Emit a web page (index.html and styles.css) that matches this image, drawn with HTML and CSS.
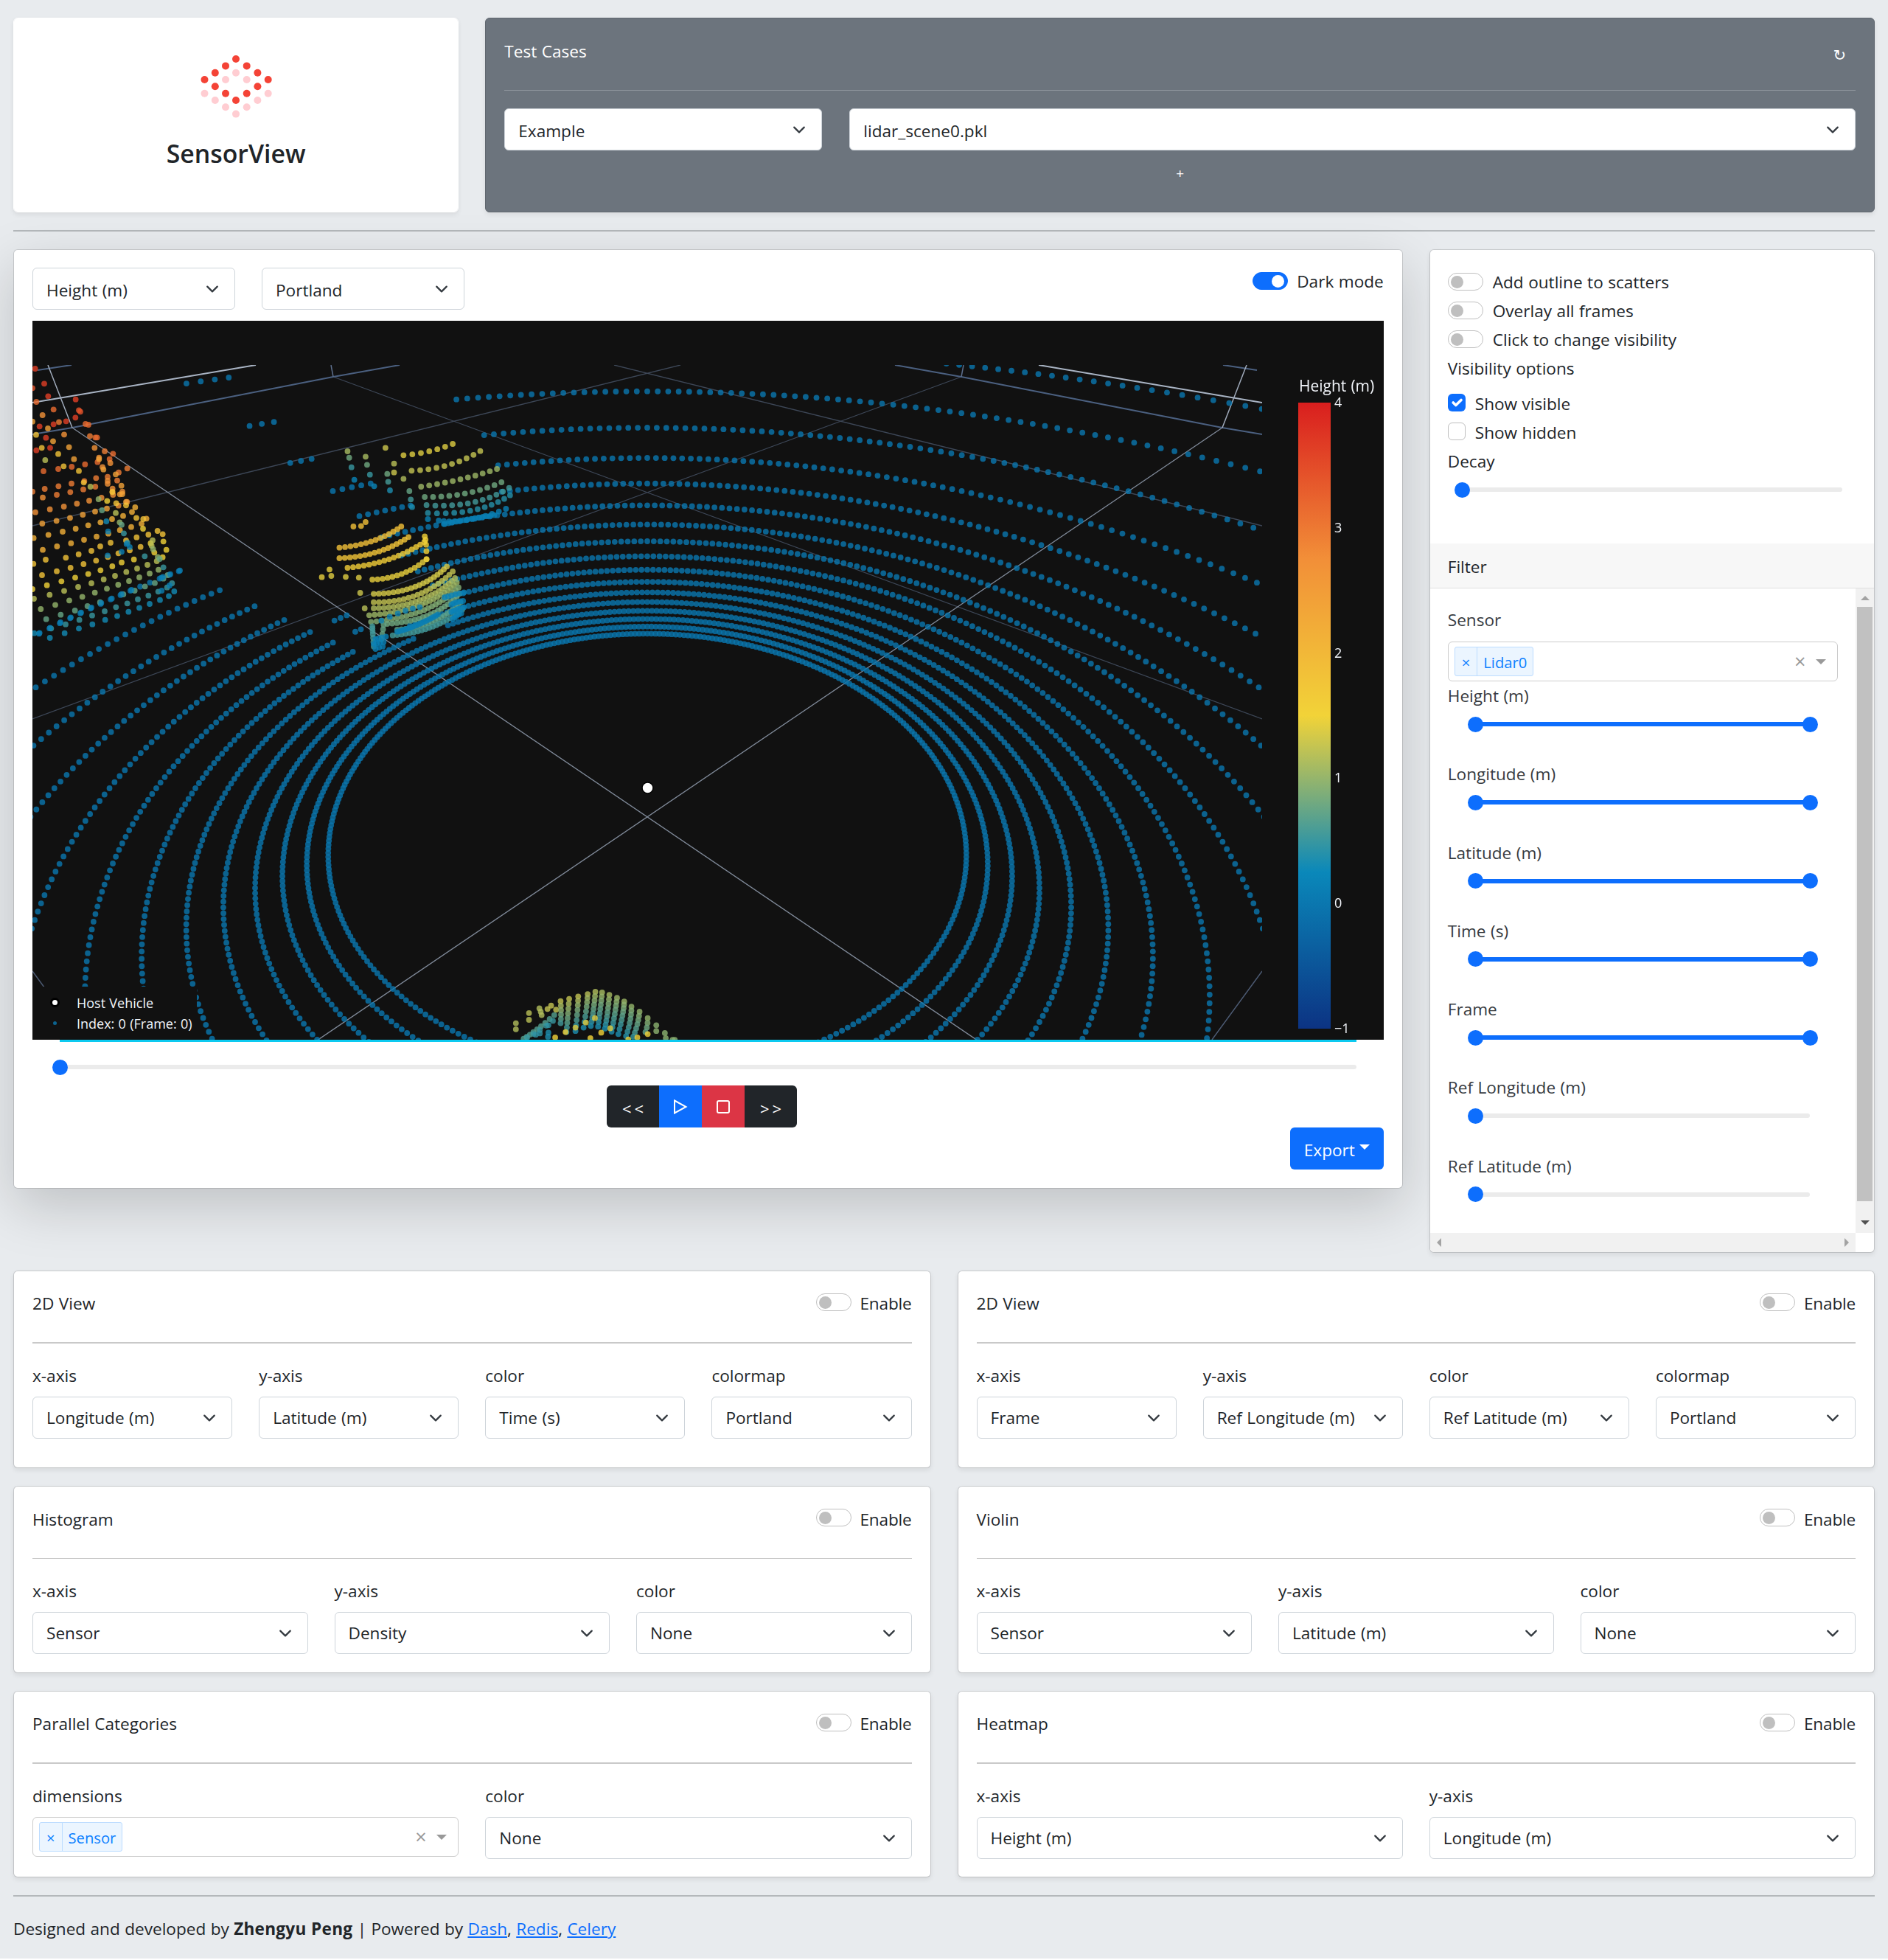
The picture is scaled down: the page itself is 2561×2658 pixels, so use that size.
FILE: index.html
```html
<!DOCTYPE html>
<html lang="en">
<head>
<meta charset="utf-8">
<title>SensorView</title>
<link rel="stylesheet" href="styles.css">
</head>
<body>
<svg class="defs" width="0" height="0">
  <symbol id="chev" viewBox="0 0 16 16"><path d="M2 5l6 6 6-6" fill="none" stroke="#343a40" stroke-width="2" stroke-linecap="round" stroke-linejoin="round"/></symbol>
</svg>
<div class="page">
  <div class="row top">
    <div class="card logo">
      <svg width="100" height="90" viewBox="270 72 100 90">
        <g fill="#ffcdd2"><circle cx="320" cy="98.7" r="5"/><circle cx="306" cy="108" r="5"/><circle cx="334.7" cy="108" r="5"/><circle cx="277.5" cy="126.7" r="5"/><circle cx="363.7" cy="126.7" r="5"/><circle cx="291.8" cy="136" r="5"/><circle cx="349.4" cy="136" r="5"/><circle cx="306" cy="145.3" r="5"/><circle cx="334.7" cy="145.3" r="5"/><circle cx="320" cy="154.6" r="5"/></g>
        <g fill="#f44336"><circle cx="320" cy="80" r="5"/><circle cx="306" cy="89.4" r="5"/><circle cx="334.7" cy="89.4" r="5"/><circle cx="291.8" cy="98.7" r="5"/><circle cx="349.4" cy="98.7" r="5"/><circle cx="277.5" cy="108" r="5"/><circle cx="363.7" cy="108" r="5"/><circle cx="291.8" cy="117.3" r="5"/><circle cx="349.4" cy="117.3" r="5"/><circle cx="306" cy="126.7" r="5"/><circle cx="334.7" cy="126.7" r="5"/><circle cx="320" cy="136" r="5"/></g>
      </svg>
      <h1>SensorView</h1>
    </div>
    <div class="card cases">
      <div class="cases-head"><span>Test Cases</span><span class="refresh">↻</span></div>
      <div class="cases-row">
        <div class="select">Example<svg><use href="#chev"/></svg></div>
        <div class="select">lidar_scene0.pkl<svg><use href="#chev"/></svg></div>
      </div>
      <div class="plus">+</div>
    </div>
  </div>
  <div class="rule"></div>
  <div class="row main">
    <div class="card view">
      <div class="view-head">
        <div class="select">Height (m)<svg><use href="#chev"/></svg></div>
        <div class="select">Portland<svg><use href="#chev"/></svg></div>
        <label class="check dark"><i class="switch on"></i>Dark mode</label>
      </div>
      <div class="plot">
        <canvas id="scene" width="1833" height="975"></canvas>
        <div class="bar-title">Height (m)</div>
        <div class="bar"></div>
        <div class="ticks"><span>4</span><span>3</span><span>2</span><span>1</span><span>0</span><span>−1</span></div>
        <div class="legend">
          <div><i class="host"></i>Host Vehicle</div>
          <div><i class="idx"></i>Index: 0 (Frame: 0)</div>
        </div>
      </div>
      <div class="progress"></div>
      <div class="slider frame"><i class="knob"></i></div>
      <div class="buttons">
        <span class="b1">&lt;&lt;</span>
        <span class="b2"><svg width="20" height="20" viewBox="0 0 20 20"><path d="M2 1.5L17.5 10L2 18.5Z" fill="none" stroke="#fff" stroke-width="2"/></svg></span>
        <span class="b3"><svg width="20" height="20" viewBox="0 0 20 20"><rect x="2" y="2" width="16" height="16" rx="2" fill="none" stroke="#fff" stroke-width="2"/></svg></span>
        <span class="b4">&gt;&gt;</span>
      </div>
      <div class="export">Export<i></i></div>
    </div>
    <div class="card side">
      <div class="opts">
        <label class="check"><i class="switch"></i>Add outline to scatters</label>
        <label class="check"><i class="switch"></i>Overlay all frames</label>
        <label class="check"><i class="switch"></i>Click to change visibility</label>
        <div class="opt-title">Visibility options</div>
        <label class="check"><i class="box on"><svg width="24" height="24" viewBox="0 0 20 20"><path d="M6 10l3 3 6-6" fill="none" stroke="#fff" stroke-width="3" stroke-linecap="round" stroke-linejoin="round"/></svg></i>Show visible</label>
        <label class="check"><i class="box"></i>Show hidden</label>
        <div class="decay-title">Decay</div>
        <div class="slider decay"><i class="knob"></i></div>
      </div>
      <div class="filter-head">Filter</div>
      <div class="filter">
        <div class="filter-body">
          <div class="flabel">Sensor</div>
          <div class="multi"><span class="tag"><b>×</b><em>Lidar0</em></span><span class="clear">×</span><i class="caret"></i></div>
          <div class="fitem"><span>Height (m)</span><div class="slider full"><i class="knob"></i><i class="knob"></i></div></div>
          <div class="fitem"><span>Longitude (m)</span><div class="slider full"><i class="knob"></i><i class="knob"></i></div></div>
          <div class="fitem"><span>Latitude (m)</span><div class="slider full"><i class="knob"></i><i class="knob"></i></div></div>
          <div class="fitem"><span>Time (s)</span><div class="slider full"><i class="knob"></i><i class="knob"></i></div></div>
          <div class="fitem"><span>Frame</span><div class="slider full"><i class="knob"></i><i class="knob"></i></div></div>
          <div class="fitem"><span>Ref Longitude (m)</span><div class="slider"><i class="knob"></i></div></div>
          <div class="fitem"><span>Ref Latitude (m)</span><div class="slider"><i class="knob"></i></div></div>
        </div>
        <div class="vbar"><i class="up"></i><i class="thumb"></i><i class="down"></i></div>
        <div class="hbar"><i class="left"></i><i class="right"></i></div>
      </div>
    </div>
  </div>
  <div class="panels">
    <div class="card panel p1">
      <div class="phead"><span>2D View</span><label class="check"><i class="switch"></i>Enable</label></div>
      <div class="fields">
        <div><span>x-axis</span><div class="select">Longitude (m)<svg><use href="#chev"/></svg></div></div>
        <div><span>y-axis</span><div class="select">Latitude (m)<svg><use href="#chev"/></svg></div></div>
        <div><span>color</span><div class="select">Time (s)<svg><use href="#chev"/></svg></div></div>
        <div><span>colormap</span><div class="select">Portland<svg><use href="#chev"/></svg></div></div>
      </div>
    </div>
    <div class="card panel p1">
      <div class="phead"><span>2D View</span><label class="check"><i class="switch"></i>Enable</label></div>
      <div class="fields">
        <div><span>x-axis</span><div class="select">Frame<svg><use href="#chev"/></svg></div></div>
        <div><span>y-axis</span><div class="select">Ref Longitude (m)<svg><use href="#chev"/></svg></div></div>
        <div><span>color</span><div class="select">Ref Latitude (m)<svg><use href="#chev"/></svg></div></div>
        <div><span>colormap</span><div class="select">Portland<svg><use href="#chev"/></svg></div></div>
      </div>
    </div>
    <div class="card panel p2">
      <div class="phead"><span>Histogram</span><label class="check"><i class="switch"></i>Enable</label></div>
      <div class="fields">
        <div><span>x-axis</span><div class="select">Sensor<svg><use href="#chev"/></svg></div></div>
        <div><span>y-axis</span><div class="select">Density<svg><use href="#chev"/></svg></div></div>
        <div><span>color</span><div class="select">None<svg><use href="#chev"/></svg></div></div>
      </div>
    </div>
    <div class="card panel p2">
      <div class="phead"><span>Violin</span><label class="check"><i class="switch"></i>Enable</label></div>
      <div class="fields">
        <div><span>x-axis</span><div class="select">Sensor<svg><use href="#chev"/></svg></div></div>
        <div><span>y-axis</span><div class="select">Latitude (m)<svg><use href="#chev"/></svg></div></div>
        <div><span>color</span><div class="select">None<svg><use href="#chev"/></svg></div></div>
      </div>
    </div>
    <div class="card panel p3">
      <div class="phead"><span>Parallel Categories</span><label class="check"><i class="switch"></i>Enable</label></div>
      <div class="fields">
        <div><span>dimensions</span><div class="multi"><span class="tag"><b>×</b><em>Sensor</em></span><span class="clear">×</span><i class="caret"></i></div></div>
        <div><span>color</span><div class="select">None<svg><use href="#chev"/></svg></div></div>
      </div>
    </div>
    <div class="card panel p3">
      <div class="phead"><span>Heatmap</span><label class="check"><i class="switch"></i>Enable</label></div>
      <div class="fields">
        <div><span>x-axis</span><div class="select">Height (m)<svg><use href="#chev"/></svg></div></div>
        <div><span>y-axis</span><div class="select">Longitude (m)<svg><use href="#chev"/></svg></div></div>
      </div>
    </div>
  </div>
  <div class="rule last"></div>
  <footer>Designed and developed by <strong>Zhengyu Peng</strong> | Powered by <a>Dash</a>, <a>Redis</a>, <a>Celery</a></footer>
</div>
<script src="scene.js"></script>
</body>
</html>
```
FILE: styles.css
```css
* { box-sizing: border-box; }
body { margin: 0; background: #fff; color: #212529; font: 22.6px/36px "Open Sans", "Noto Sans", sans-serif; word-spacing: .6px; }
i, em { font-style: normal; }
.defs { position: absolute; }
.page { height: 2656px; background: #e8ebee; padding: 24px 18px 0; overflow: hidden; }
.row { display: grid; grid-template-columns: 604.25px 1884.75px; gap: 36px; }
.card { background: #fff; border: 1px solid rgba(0,0,0,.125); background-clip: padding-box; border-radius: 6px; box-shadow: 0 3px 6px rgba(0,0,0,.075); }
.top { height: 264px; }
.logo { display: flex; flex-direction: column; align-items: center; padding-top: 47px; border-color: #fff; }
.logo h1 { margin: 21px 0 0; font-size: 33.8px; line-height: 50px; font-weight: 600; }
.cases { background: #6c747d; border-color: #5f666e; padding: 0 25px; color: #fff; }
.cases-head { height: 98px; padding: 27px 0 0; display: flex; justify-content: space-between; border-bottom: 1px solid #8e959c; }
.refresh { margin: 5px 13px 0 0; font: 21px/36px "DejaVu Sans", sans-serif; }
.cases-row { display: grid; grid-template-columns: 431px 1fr; gap: 37px; margin-top: 24px; }
.plus { text-align: center; font-size: 19px; line-height: 24px; margin-top: 19px; }
.select { position: relative; height: 57px; border: 1px solid #ced4da; border-radius: 6px; background: #fff; color: #212529; padding: 10px 50px 0 18px; white-space: nowrap; }
.cases .select, .view .select { padding-top: 11.5px; }
.select svg { position: absolute; right: 21px; top: 19px; width: 18px; height: 18px; }
.rule { height: 2px; background: #b4b8bb; margin: 24px 0; }
.main { grid-template-columns: 1884.75px 604.25px; height: 1360px; align-items: start; }
.view { height: 1274px; padding: 24px 25px 0; box-shadow: 0 24px 72px rgba(0,0,0,.175); }
.view-head { display: flex; gap: 36px; height: 72px; }
.view-head .select { width: 275px; }
.check { display: flex; height: 36px; line-height: 38px; margin-bottom: 3px; white-space: nowrap; }
.dark { margin-left: auto; }
.switch { width: 48px; height: 24px; border: 1.5px solid #bfbfbf; border-radius: 12px; margin: 6px 13px 0 0; padding: 3px; background: #fff; }
.dark .switch { margin-right: 12px; }
.switch::after { content: ""; display: block; width: 17px; height: 17px; border-radius: 50%; background: #bfbfbf; }
.switch.on { background: #0d6efd; border-color: #0d6efd; padding-left: 25px; }
.switch.on::after { background: #fff; }
.plot { position: relative; width: 1833px; height: 975px; background: #111; color: #f2f5fa; font-size: 18px; }
.plot canvas { display: block; }
.bar-title { position: absolute; left: 1718px; top: 70px; font-size: 21px; }
.bar { position: absolute; left: 1717px; top: 111px; width: 44px; height: 849px; background: linear-gradient(#d91e1e, #f28f38 25%, #f2d338 50%, #0a88ba 75%, #0c3383); }
.ticks { position: absolute; left: 1766px; top: 92px; display: flex; flex-direction: column; justify-content: space-between; height: 885px; }
.ticks span { height: 36px; }
.legend { position: absolute; left: 0; top: 903px; width: 223px; height: 72px; background: #111; padding-top: 8px; }
.legend div { display: flex; align-items: center; height: 28px; padding-left: 60px; position: relative; }
.legend i { position: absolute; border-radius: 50%; background: #fff; left: 26.5px; top: 10px; width: 7px; height: 7px; box-shadow: 0 0 0 3px #000; }
.legend .idx { background: #0c638f; width: 5px; height: 5px; left: 28px; top: 11px; box-shadow: none; }
.progress { height: 3px; margin: 0 37px; background: #0dcaf0; }
.slider { display: flex; align-items: center; justify-content: space-between; height: 6px; border-radius: 3px; background: #ebebeb; }
.slider .knob { width: 21px; height: 21px; border-radius: 50%; background: #0d6efd; margin: 0 -10.5px; }
.slider.full { background: #0d6efd; }
.frame { margin: 31px 37px 0; }
.buttons { display: flex; margin: 22px auto 0 779px; width: 258px; height: 57px; border-radius: 6px; overflow: hidden; color: #fff; text-align: center; }
.buttons span { display: flex; align-items: center; justify-content: center; }
.b1, .b4 { width: 71px; background: #212529; letter-spacing: 4px; padding: 5px 0 0 4px; font-size: 22px; }
.b2 { width: 58px; background: #0d6efd; }
.b3 { width: 58px; background: #dc3545; }
.export { margin-left: auto; width: 127px; height: 57px; border-radius: 6px; background: #0d6efd; color: #fff; display: flex; align-items: center; padding: 4px 0 0 19px; }
.export i { border: 7px solid transparent; border-top-color: #fff; border-bottom: 0; margin: -8px 0 0 6px; }
.side { height: 1361px; display: flex; flex-direction: column; overflow: hidden; }
.opts { height: 398px; padding: 25px 43px 0 24px; }
.opts .check .box { margin-right: 13px; }
.opt-title { height: 36px; line-height: 38px; margin-bottom: 12px; }
.decay-title { height: 36px; line-height: 38px; }
.box { width: 24px; height: 24px; border: 1.5px solid #bfbfbf; border-radius: 6px; margin-top: 5px; }
.box.on { border: 0; background: #0d6efd; }
.box svg { display: block; }
.decay { margin: 18px 0 0 20px; }
.filter-head { height: 61px; padding: 14px 24px 0; background: #f7f7f7; border-bottom: 1.5px solid #dfdfdf; }
.filter { flex: 1; display: grid; grid-template: 1fr 26px / 1fr 25px; }
.filter-body { padding: 24px 24px 0; color: #373b3f; }
.flabel { height: 48px; padding-top: 1px; }
.multi { display: flex; align-items: center; height: 54px; border: 1.5px solid #ccc; border-radius: 6px; background: #fff; padding: 0 15.5px 0 8px; }
.tag { display: flex; height: 40px; border: 1.5px solid #bcdcff; border-radius: 3px; background: #ebf5ff; color: #0d80ff; font-size: 20.2px; line-height: 41px; }
.tag b { font-weight: 400; width: 30.5px; text-align: center; border-right: 1.5px solid #bcdcff; }
.tag em { padding: 0 8px; }
.clear { margin-left: auto; color: #999; font-size: 27px; line-height: 50px; padding-right: 13px; }
.caret { border: 7.5px solid transparent; border-top-color: #999; border-bottom: 0; }
.fitem { height: 106.3px; padding-top: 2px; }
.fitem span { display: block; height: 53px; }
.fitem .slider { margin: 0 38px; }
.vbar { background: #f1f1f1; display: flex; flex-direction: column; align-items: center; }
.vbar .up { border: 6px solid transparent; border-top: 0; border-bottom-color: #a3a3a3; margin-top: 10px; }
.vbar .thumb { width: 21px; height: 806px; background: #c1c1c1; margin-top: 9px; }
.vbar .down { border: 6px solid transparent; border-bottom: 0; border-top-color: #505050; margin-top: 26px; }
.hbar { background: #f1f1f1; display: flex; align-items: center; justify-content: space-between; padding: 0 9px; }
.hbar i { border: 6px solid transparent; }
.hbar .left { border-left: 0; border-right-color: #a3a3a3; }
.hbar .right { border-right: 0; border-left-color: #a3a3a3; }
.panels { display: grid; grid-template-columns: 1fr 1fr; grid-template-rows: 268px 254px 253px; gap: 24px 36px; margin-top: 25px; }
.panel { padding: 25px 25px 0; }
.phead { display: flex; justify-content: space-between; height: 73px; line-height: 38px; border-bottom: 2px solid #c9c9c9; }
.phead .check { letter-spacing: -.2px; }
.phead .switch { margin-right: 12px; margin-top: 5px; }
.p2 .phead { border-bottom-width: 1px; }
.p2 .phead, .p2 .phead .check { line-height: 39px; }
.fields { display: grid; grid-auto-flow: column; grid-auto-columns: 1fr; gap: 36px; margin-top: 24px; }
.fields span { display: block; }
.fields > div > span { height: 48px; padding-top: 2px; }
.fields .multi span { height: auto; }
.fields .multi .tag { display: flex; height: 40px; }
.rule.last { margin: 24px 0 0; }
footer { margin-top: 26px; word-spacing: .5px; }
footer strong { letter-spacing: .25px; }
footer a { color: #0d6efd; text-decoration: underline; }
```
FILE: scene.js
```javascript
// Draws the lidar point cloud and the 3D axes on the dark scene canvas.
const ctx = document.getElementById('scene').getContext('2d');
ctx.translate(-44, -435);
ctx.beginPath();
ctx.rect(44, 495, 1668, 915);
ctx.clip();

const CX = 878;
function line(x1, y1, x2, y2, color, w, mirror = true) {
  ctx.strokeStyle = color;
  ctx.lineWidth = w;
  ctx.beginPath();
  ctx.moveTo(x1, y1); ctx.lineTo(x2, y2);
  if (mirror) { ctx.moveTo(2 * CX - x1, y1); ctx.lineTo(2 * CX - x2, y2); }
  ctx.stroke();
}
line(452, 511, 1712, 975, '#3d4757', 1.3);
line(44, 713, 923, 495, '#3d4757', 1.3);
line(44, 1317, 112, 1410, '#4c5a72', 1.5);
line(44, 589, 98, 580, '#4b6080', 2);
line(98, 580, 452, 511, '#4b6080', 2);
line(452, 511, 542, 495, '#4b6080', 2);
line(51, 502, 97, 495, '#4b6080', 2);
line(449, 495, 452, 511, '#5c6e8c', 1.5);
line(44, 546, 347, 495, '#a9b4c4', 2);
line(65, 495, 98, 580, '#a0abbb', 1.5);
line(98, 580, 1326, 1411, '#7f8998', 1.4);

const STOPS = [[12, 51, 131], [10, 136, 186], [242, 211, 56], [242, 143, 56], [217, 30, 30]];
function portland(p) {
  const k = Math.min(3, Math.floor(p * 4)), t = p * 4 - k;
  return STOPS[k].map((c, i) => Math.round(c + (STOPS[k + 1][i] - c) * t));
}
function dot(x, y, p, r = 3.9) {
  ctx.fillStyle = `rgba(${portland(p)},0.8)`;
  ctx.beginPath();
  ctx.arc(x, y, r, 0, Math.PI * 2);
  ctx.fill();
}

// Ground rings: [y of the far end, blocked angle ranges], angles measured from the left axis.
const C = 904, F = 1366, HORIZON = 165;
const rings = [
  [859.3, []], [849.7, []], [839.3, []], [828.3, []], [816.3, []],
  [803.3, [[45, 50]]], [789, [[36, 45]]], [772.7, [[36, 38], [41, 54]]], [754.3, [[36, 38], [42, 54]]],
  [734, [[36, 54]]], [711.3, [[36, 54]]], [685.3, [[36, 54]]], [655.7, [[36, 54], [62, 71]]],
  [621, [[-90, 54], [60, 72]]], [580, [[-90, 53], [57, 72]]], [530.7, [[-90, 53], [57, 71]]],
  [472.9, [[-90, 52], [57, 114]]]
];
for (const [far, gaps] of rings) {
  const s = C / (far - HORIZON) - 1;
  for (let a = -180; a < 180; a++) {
    if (gaps.some(([b, e]) => a >= b && a <= e)) continue;
    const t = a * Math.PI / 180;
    const depth = 1 + s * Math.sin(t);
    if (depth < 0.3) continue;
    dot(CX - F * s * Math.cos(t) / depth, HORIZON + C / depth, 0.2);
  }
}

// Building facade on the left, in facade coordinates (three units per pixel).
const facade = {
  0.93: '23,30 60,91 76,142 188,155 41,265 98,256 149,244 187,229 67,311 84,352 28,362',
  0.88: '201,199 207,205 12,109',
  0.83: '98,196 28,165 228,255 240,258 57,447 117,438 172,429 226,419 277,410 340,376 326,398 268,310 275,310',
  0.79: '120,247 246,304 306,366 271,475 171,497 118,508 62,519 223,487 318,470 363,452 12,530 398,436 357,485 219,521 268,510 166,532 111,543',
  0.74: '53,219 141,298 265,352 283,392 297,430 318,486 54,554 24,614 83,602 140,591 193,579 243,567 293,555 329,414 340,543 378,530 397,572 362,587 338,518 318,498',
  0.68: '75,273 96,325 161,349 181,398 52,660 110,649 165,637 217,624 267,611 315,599 283,398 301,440 351,460 374,506 338,530 378,540 368,541 393,572 12,245',
  0.63: '17,719 77,706 135,693 188,681 239,667 289,655 336,642 381,629 417,613 430,594 476,640 368,687 414,674 321,701 54,767 112,753 169,740 222,726 273,713 456,661',
  0.56: '27,299 50,352 117,377 139,427 201,446 221,493 353,577 393,586 435,637 463,642 521,690 542,703 484,705 436,716 393,729 330,738 288,753 252,771 200,785 148,799 66,807 16,824 452,755 408,769 362,781 319,796 271,811 220,825 167,840 111,854 51,870 337,532',
  0.5: '545,733 493,740 557,767 508,778 12,927 71,911 130,895 186,880 239,865 289,850 337,834 375,818 425,806 462,681 316,568 542,797',
  0.44: '64,402 248,510 18,966 82,950 141,934 198,918 252,903 302,887 348,873 394,857 438,843 480,828 518,813 501,728 497,750 351,617',
  0.4: '281,561 46,1008 105,991 162,973 215,958 266,941 315,925 361,909 405,894 447,879 489,863 525,848 367,655 503,764 522,796',
  0.35: '295,606 68,1049 127,1031 185,1014 236,996 287,980 382,948 428,933 470,916 510,902 545,884 375,665 530,804 562,870',
  0.3: '88,1087 147,1070 203,1052 255,1034 306,1017 352,1000 398,985 441,968 484,953 524,937 560,920 384,700 399,738 545,838 469,793 580,903',
  0.26: '19,1106 83,1125 143,1106 201,1087 256,1070 308,1052 357,1036 403,1019 447,1003 489,987 531,971 567,955 589,936 313,651',
  0.22: '84,1084 126,1062 168,1042 210,1022 252,1002 292,983 335,965 375,947 415,930 41,1105 320,692 318,790 375,775 395,743 408,756 536,881 573,866 612,851 538,933 570,912 543,877'
};
for (const [p, list] of Object.entries(facade)) {
  for (const s of list.split(' ')) {
    const [x, y] = s.split(',').map(Number);
    dot(40 + x / 3, 490 + y / 3, +p);
  }
}

// Vehicles: each arc is [x1, y1, xMid, yMid, x2, y2, count, colour position, end colour position].
function arcs(list, sx, oy, sy) {
  for (const [x1, y1, xm, ym, x2, y2, n, p, q = p] of list) {
    for (let i = 0; i < n; i++) {
      const t = n > 1 ? i / (n - 1) : 0;
      const a = (1 - t) * (1 - 2 * t), b = 4 * t * (1 - t), c = t * (2 * t - 1);
      dot((a * x1 + b * xm + c * x2) / sx, oy + (a * y1 + b * ym + c * y2) / sy, p + (q - p) * t);
    }
  }
}
arcs([
  [894, 562, 951, 546, 1003, 516, 7, .48], [912, 625, 993, 602, 1064, 545, 10, .45],
  [933, 690, 1020, 660, 1101, 618, 11, .41], [941, 732, 1030, 718, 1111, 672, 11, .36],
  [945, 765, 1045, 755, 1128, 695, 12, .31], [948, 797, 1050, 785, 1130, 725, 12, .28],
  [948, 822, 948, 822, 948, 822, 1, .24], [972, 828, 1040, 824, 1121, 780, 12, .23],
  [985, 842, 1040, 822, 1095, 806, 14, .22],
  [770, 546, 776, 590, 785, 662, 4, .42, .24], [810, 568, 816, 620, 829, 688, 4, .42, .24],
  [854, 532, 865, 582, 873, 632, 2, .46], [894, 658, 894, 658, 894, 658, 1, .43], [873, 596, 873, 596, 873, 596, 1, .44],
  [858, 638, 860, 670, 864, 705, 3, .36, .27], [907, 708, 910, 742, 913, 773, 3, .35, .27],
  [783, 852, 800, 850, 810, 834, 3, .57], [752, 938, 827, 910, 889, 852, 14, .57],
  [752, 981, 835, 956, 905, 895, 16, .55], [770, 1020, 862, 985, 940, 915, 17, .52],
  [941, 892, 944, 926, 945, 985, 5, .5], [825, 1068, 890, 1045, 945, 985, 13, .49],
  [730, 1027, 730, 1027, 713, 1058, 2, .49], [734, 1053, 766, 1057, 795, 1060, 3, .48],
  [798, 1122, 798, 1122, 798, 1122, 1, .46], [828, 1126, 920, 1097, 990, 1015, 19, .47],
  [828, 1160, 925, 1130, 1003, 1035, 19, .45], [808, 1185, 808, 1185, 808, 1185, 1, .44],
  [828, 1185, 930, 1152, 1008, 1062, 21, .43], [818, 1213, 930, 1172, 1012, 1080, 22, .41],
  [822, 1240, 935, 1195, 1016, 1100, 22, .38], [858, 1248, 950, 1212, 1018, 1125, 20, .36],
  [880, 1272, 960, 1238, 1020, 1160, 20, .34], [870, 1295, 955, 1262, 1024, 1190, 20, .31],
  [825, 1258, 826, 1290, 828, 1340, 7, .31], [850, 1252, 848, 1280, 845, 1310, 4, .35],
  [880, 1280, 925, 1252, 970, 1210, 20, .22], [845, 1235, 890, 1200, 930, 1180, 6, .22],
  [985, 1140, 1005, 1130, 1028, 1120, 6, .23], [1000, 1170, 1012, 1160, 1026, 1155, 6, .23],
  [1000, 1200, 1012, 1190, 1028, 1180, 6, .23], [1003, 1228, 1012, 1215, 1022, 1205, 5, .23],
  [832, 1310, 842, 1305, 855, 1300, 4, .23], [828, 1330, 838, 1325, 850, 1322, 4, .23], [832, 1350, 840, 1345, 848, 1340, 3, .22]
], 1.6333, 430, 3);
arcs([
  [1143, 1062, 1143, 1070, 1143, 1080, 2, .43], [1172, 1032, 1173, 1045, 1172, 1052, 2, .44],
  [1195, 1018, 1198, 1028, 1200, 1038, 3, .43], [1213, 1020, 1217, 1017, 1221, 1010, 2, .45],
  [1232, 1022, 1232, 1022, 1232, 1022, 1, .45],
  [1242, 997, 1243, 1030, 1242, 1062, 6, .45, .31], [1261, 990, 1258, 1040, 1255, 1088, 8, .45, .29],
  [1281, 983, 1279, 1030, 1275, 1085, 8, .45, .27], [1302, 976, 1299, 1020, 1293, 1075, 8, .44, .27],
  [1319, 969, 1315, 1020, 1309, 1070, 9, .43, .27], [1334, 971, 1330, 1020, 1325, 1072, 9, .42, .27],
  [1350, 978, 1346, 1030, 1340, 1078, 9, .42, .27], [1367, 987, 1362, 1035, 1355, 1087, 9, .41, .27],
  [1383, 998, 1379, 1040, 1370, 1094, 9, .41, .27], [1399, 1013, 1396, 1055, 1387, 1100, 8, .4, .28],
  [1417, 1028, 1412, 1065, 1403, 1102, 7, .4, .3], [1435, 1047, 1434, 1068, 1430, 1088, 4, .4, .34],
  [1454, 1068, 1455, 1075, 1454, 1085, 2, .39], [1473, 1091, 1473, 1098, 1475, 1106, 2, .39],
  [1490, 1111, 1493, 1111, 1495, 1111, 2, .39],
  [1160, 1108, 1190, 1080, 1228, 1038, 9, .33], [1168, 1104, 1196, 1082, 1225, 1055, 5, .3],
  [1187, 1096, 1196, 1092, 1215, 1068, 3, .29], [1215, 1090, 1215, 1096, 1214, 1102, 2, .27],
  [1253, 1088, 1242, 1096, 1230, 1104, 2, .5], [1275, 1075, 1298, 1060, 1318, 1047, 3, .48],
  [1308, 1106, 1320, 1098, 1332, 1090, 2, .5], [1352, 1077, 1352, 1077, 1352, 1077, 1, .48],
  [1392, 1110, 1412, 1104, 1435, 1094, 3, .5]
], 1.6333, 900, 2.178);

// Host vehicle marker.
ctx.beginPath();
ctx.arc(878.5, 1068.5, 7.5, 0, Math.PI * 2);
ctx.fillStyle = '#fff';
ctx.fill();
ctx.strokeStyle = '#000';
ctx.lineWidth = 1.5;
ctx.stroke();
```
